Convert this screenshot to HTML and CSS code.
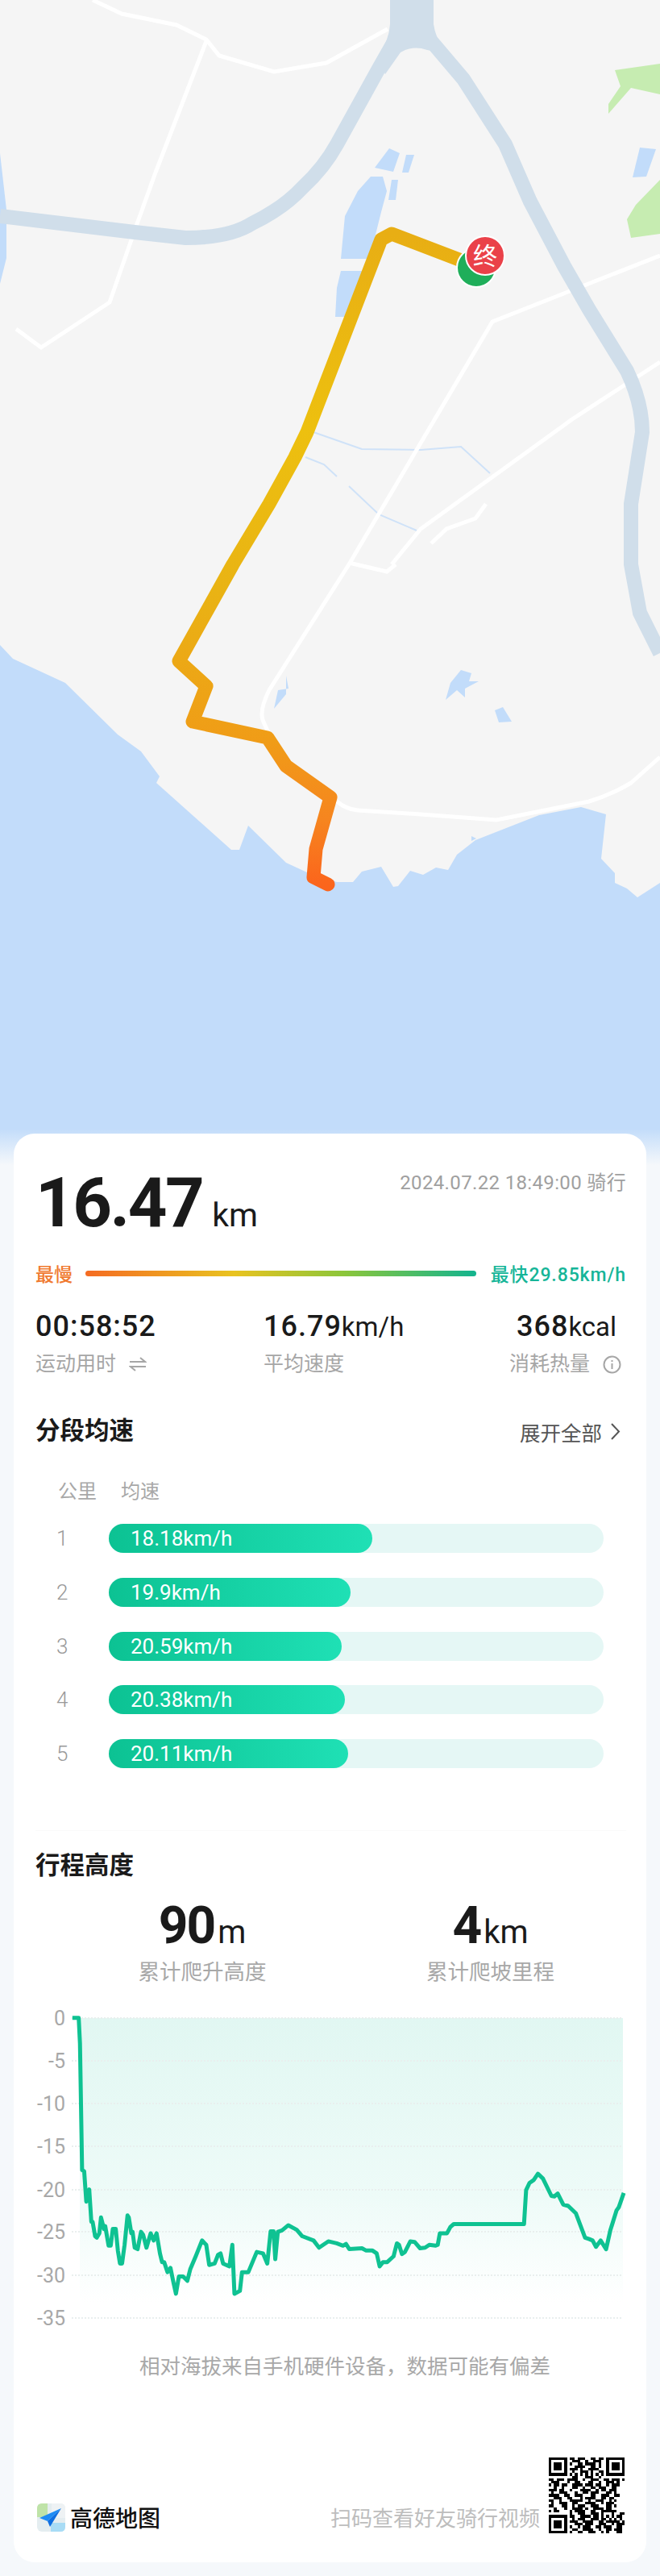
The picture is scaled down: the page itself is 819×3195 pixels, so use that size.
FILE: index.html
```html
<!DOCTYPE html>
<html lang="zh-CN">
<head>
<meta charset="utf-8">
<title>骑行记录</title>
<link rel="stylesheet" href="styles.css">
</head>
<body>

<!-- mapa: coordenadas em pixels da imagem -->
<svg class="map" width="819" height="1445" viewBox="0 0 819 1445">
  <defs>
    <linearGradient id="routeGrad" gradientUnits="userSpaceOnUse" x1="0" y1="290" x2="0" y2="1097">
      <stop offset="0" stop-color="#e8ae14"/>
      <stop offset="0.3" stop-color="#edc00f"/>
      <stop offset="0.55" stop-color="#e9b314"/>
      <stop offset="0.78" stop-color="#f09c17"/>
      <stop offset="0.9" stop-color="#f6851f"/>
      <stop offset="1" stop-color="#fb651c"/>
    </linearGradient>
    <linearGradient id="mapFade" x1="0" y1="0" x2="0" y2="1">
      <stop offset="0" stop-color="#f5f8fb" stop-opacity="0"/>
      <stop offset="1" stop-color="#f5f8fb"/>
    </linearGradient>
  </defs>
  <rect class="land" width="819" height="1445"/>

  <path class="water" d="M0 800L16 817L81 847L146 911L175 932L198 963L194 971L287 1054L297 1054L308 1024L355 1070L381 1082L418 1094L438 1094L449 1081L473 1075L488 1100L494 1099L509 1080L525 1085L541 1076L556 1079L567 1060L590 1042L669 1011L721 1001L752 1010L746 1065L763 1083L763 1095L778 1102L791 1113L819 1095V1445H0Z"/>
  <path class="water" d="M0 190L8 260V320L0 352Z"/>
  <path class="water" d="M475 219L480 237L473 263L465 295L460 321L423 321L428 268L444 237L460 219Z"/>
  <path class="water" d="M423 336L452 336L431 393L416 393L418 357Z"/>
  <path class="water" d="M483 184L496 190L488 213L465 208Z"/>
  <path class="water" d="M504 192L514 192L507 214L499 214Z"/>
  <path class="water" d="M486 223L494 223L491 248L482 248Z"/>
  <path class="water" d="M794 183L814 185L802 219L785 220Z"/>
  <path class="water" d="M572 831L585 835L582 845L594 845L577 854L577 865L567 856L553 868L559 847Z"/>
  <path class="water" d="M624 877L635 895L619 896L614 881Z"/>
  <path class="water" d="M355 838L358 854L345 856L340 879L355 861Z"/>
  <path class="water" d="M585 1037L591 1040L585 1043Z"/>
  <path class="stream" d="M389 536L449 557L522 558L572 554L608 587"/>
  <path class="stream" d="M379 567L402 576L418 591M433 603L470 638L517 658"/>

  <path class="park" d="M763 87L819 79V117L783 109L755 141V129L770 107Z"/>
  <path class="park" d="M819 223L789 254L778 272L783 295L819 290Z"/>

  <g class="minor">
    <path d="M115 0L151 17L219 31L256 49L272 69L340 89L405 78L481 36"/>
    <path d="M256 51L193 214L167 286L136 375L51 431L20 408"/>
    <path d="M819 317L611 399L433 700L334 856Q322 880 326 893L334 911"/>
    <path d="M819 449L710 520L522 656L486 700"/>
    <path d="M603 625L590 643L554 656L535 674"/>
    <path d="M433 698L480 709L491 700"/>
    <path d="M418 994Q430 1004 444 1005L522 1010L616 1017L731 994Q760 985 783 971L819 939"/>
  </g>

  <g class="major">
    <path d="M0 268L167 288L230 295Q285 295 313 277Q352 258 376 232Q402 208 418 179L470 85L490 50"/>
    <path d="M530 45L575 98L627 179L658 250L700 330L731 384L778 460Q797 500 797 536L783 625V700L794 760L819 810"/>
  </g>
  <path class="junction" d="M484 0H538V30Q540 45 552 66L530 62Q512 56 497 65L478 92L468 72Q483 50 484 30Z"/>

  <path class="route" d="M575 324L486 290L473 297L381 536L366 567L334 625L289 700L222 820L256 851L239 895L332 915L355 950L410 989L392 1053L389 1088L407 1097"/>

  <circle class="pin-start" cx="591" cy="332" r="24"/>
  <circle class="pin-end" cx="602" cy="317" r="24"/>
  <text class="pin-text" x="602" y="328">终</text>

  <rect x="0" y="1400" width="819" height="45" fill="url(#mapFade)"/>
</svg>

<div class="card">

  <div class="head">
    <div class="dist"><span class="dist-num">16.47</span><span class="dist-unit">km</span></div>
    <div class="date">2024.07.22 18:49:00 骑行</div>
  </div>

  <div class="speed-range">
    <span class="slow">最慢</span>
    <div class="speed-bar"></div>
    <span class="fast">最快29.85km/h</span>
  </div>

  <div class="stats">
    <div>
      <div class="stat-val">00:58:52</div>
      <div class="stat-label">运动用时
        <svg class="icon" width="22" height="18" viewBox="0 0 22 18"><path d="M1 6H20L14 1M21 12H2L8 17"/></svg>
      </div>
    </div>
    <div>
      <div class="stat-val">16.79<small>km/h</small></div>
      <div class="stat-label">平均速度</div>
    </div>
    <div class="stat-right">
      <div class="stat-val">368<small>kcal</small></div>
      <div class="stat-label">消耗热量
        <svg class="icon" width="23" height="23" viewBox="0 0 23 23"><circle cx="11.5" cy="11.5" r="10"/><path d="M11.5 10V17M11.5 6V8"/></svg>
      </div>
    </div>
  </div>

  <div class="section-head">
    <h3>分段均速</h3>
    <div class="more">展开全部
      <svg class="icon chevron" width="13" height="21" viewBox="0 0 13 21"><path d="M2 1L11 10.5L2 20"/></svg>
    </div>
  </div>

  <div class="col-head"><span>公里</span><span>均速</span></div>

  <div class="bars">
    <div class="bar-row"><span class="bar-no">1</span><div class="track"><div class="fill" style="width:327px">18.18km/h</div></div></div>
    <div class="bar-row"><span class="bar-no">2</span><div class="track"><div class="fill" style="width:300px">19.9km/h</div></div></div>
    <div class="bar-row"><span class="bar-no">3</span><div class="track"><div class="fill" style="width:289px">20.59km/h</div></div></div>
    <div class="bar-row"><span class="bar-no">4</span><div class="track"><div class="fill" style="width:293px">20.38km/h</div></div></div>
    <div class="bar-row"><span class="bar-no">5</span><div class="track"><div class="fill" style="width:297px">20.11km/h</div></div></div>
  </div>

  <div class="altitude">
    <h3>行程高度</h3>
    <div class="climb">
      <div class="climb-item">
        <div class="climb-val">90<small>m</small></div>
        <div class="climb-label">累计爬升高度</div>
      </div>
      <div class="climb-item">
        <div class="climb-val">4<small>km</small></div>
        <div class="climb-label">累计爬坡里程</div>
      </div>
    </div>
  </div>

  <svg class="chart" width="733" height="400" viewBox="44 2490 733 400">
    <defs>
      <linearGradient id="areaGrad" x1="0" y1="0" x2="0" y2="1">
        <stop offset="0" stop-color="#e1f7f2"/>
        <stop offset="0.6" stop-color="#eefbf8"/>
        <stop offset="0.95" stop-color="#ffffff"/>
      </linearGradient>
    </defs>
    <rect x="99" y="2503" width="674" height="372" fill="url(#areaGrad)"/>
    <g class="grid">
      <path d="M89 2503H773M89 2556H773M89 2609H773M89 2662H773M89 2716H773M89 2768H773M89 2822H773M89 2875H773"/>
    </g>
    <g class="axis">
      <text x="81" y="2512">0</text>
      <text x="81" y="2565">-5</text>
      <text x="81" y="2618">-10</text>
      <text x="81" y="2671">-15</text>
      <text x="81" y="2725">-20</text>
      <text x="81" y="2777">-25</text>
      <text x="81" y="2831">-30</text>
      <text x="81" y="2884">-35</text>
    </g>
    <!-- pontos medidos no recorte ampliado, por isso a escala -->
    <g transform="translate(0 2270) scale(0.5223 0.3571)">
      <polyline class="line" points="172,652 187,652 190,740 195,1180 200,1185 205,1290 212,1248 217,1360 220,1360 226,1410 230,1415 236,1400 240,1345 247,1385 250,1375 258,1443 263,1443 268,1385 275,1385 280,1460 285,1505 290,1505 296,1440 303,1338 306,1345 312,1400 315,1395 320,1450 327,1455 335,1395 340,1405 348,1450 358,1400 365,1425 372,1400 380,1470 385,1500 390,1500 398,1535 405,1520 412,1570 418,1610 425,1550 435,1550 445,1565 452,1525 465,1480 480,1425 490,1440 497,1510 510,1505 518,1475 524,1470 530,1505 545,1515 552,1440 557,1610 570,1600 575,1535 590,1535 600,1500 610,1465 625,1470 635,1505 643,1393 650,1393 654,1490 660,1395 670,1390 685,1372 705,1388 718,1410 745,1425 758,1450 780,1428 800,1435 815,1443 822,1437 830,1455 860,1452 870,1460 885,1460 895,1470 902,1515 910,1500 920,1500 935,1480 943,1435 948,1440 955,1472 962,1465 975,1428 985,1430 998,1452 1010,1450 1020,1440 1035,1443 1040,1440 1045,1400 1062,1400 1070,1378 1078,1368 1245,1368 1250,1250 1258,1225 1268,1215 1278,1193 1290,1210 1310,1270 1317,1272 1325,1262 1338,1300 1350,1305 1368,1330 1390,1415 1400,1420 1408,1425 1416,1447 1427,1425 1440,1455 1450,1390 1465,1320 1470,1310 1482,1260"/>
    </g>
  </svg>

  <p class="note">相对海拔来自手机硬件设备，数据可能有偏差</p>

  <div class="foot">
    <div class="brand">
      <svg width="35" height="35" viewBox="0 0 35 35">
        <rect width="35" height="35" rx="6" fill="#e4edf0"/>
        <path d="M0 6Q0 0 6 0H13V17H0Z" fill="#bfe3a8"/>
        <path d="M18 0H29Q35 0 35 6V18H18Z" fill="#eef2f4"/>
        <path d="M17 24H35V29Q35 35 29 35H17Z" fill="#a8dcf5"/>
        <path d="M30 6L3 18L13 22Z" fill="#1e8cf5"/>
        <path d="M30 6L13 22L16 29Z" fill="#0f6fe0"/>
      </svg>
      <span>高德地图</span>
    </div>
    <div class="scan">
      <span>扫码查看好友骑行视频</span>
      <svg class="qr" width="94" height="94" viewBox="0 0 29 29">
        <path fill-rule="evenodd" d="M0 0h7v7h-7zM1 1v5h5v-5zM2 2h3v3h-3zM22 0h7v7h-7zM23 1v5h5v-5zM24 2h3v3h-3zM0 22h7v7h-7zM1 23v5h5v-5zM2 24h3v3h-3z"/>
        <path class="qr-data" d="M8 .5h2m1 0h3m2 0h2m1 0h2
          M9 1.5h3m2 0h1m2 0h3
          M8 2.5h1m2 0h2m1 0h4m1 0h1
          M10 3.5h4m2 0h2m1 0h1
          M8 4.5h3m1 0h1m2 0h4
          M9 5.5h1m2 0h3m1 0h1m2 0h2
          M8 6.5h1m1 0h1m1 0h1m1 0h1m1 0h1m1 0h1m1 0h1
          M9 7.5h2m3 0h3m2 0h1
          M0 8.5h2m1 0h3m1 0h4m2 0h1m2 0h3m2 0h2m1 0h3m1 0h2
          M1 9.5h3m3 0h1m2 0h2m3 0h2m2 0h1m2 0h3m1 0h1
          M0 10.5h1m1 0h2m1 0h2m2 0h4m1 0h3m1 0h2m2 0h1m1 0h3
          M2 11.5h1m2 0h1m3 0h2m2 0h1m2 0h2m1 0h3m2 0h2
          M0 12.5h3m1 0h2m2 0h1m3 0h4m2 0h1m1 0h2m1 0h3
          M1 13.5h1m2 0h3m3 0h1m2 0h2m1 0h3m3 0h2m1 0h1
          M0 14.5h4m2 0h2m2 0h3m3 0h2m2 0h3m2 0h2
          M2 15.5h3m2 0h2m3 0h1m1 0h4m2 0h2m1 0h2
          M0 16.5h2m2 0h1m3 0h5m2 0h1m2 0h3m2 0h1m1 0h1
          M1 17.5h1m2 0h3m2 0h2m3 0h4m2 0h1m1 0h3
          M0 18.5h2m3 0h2m2 0h1m1 0h3m2 0h3m3 0h2m1 0h1
          M2 19.5h1m3 0h1m2 0h4m1 0h1m2 0h4m1 0h2
          M0 20.5h1m1 0h2m4 0h1m1 0h4m2 0h2m2 0h6
          M8 21.5h1m2 0h3m2 0h3m1 0h1m3 0h1m2 0h2
          M8 22.5h2m2 0h4m1 0h2m1 0h1m1 0h1m1 0h1m1 0h2
          M9 23.5h1m1 0h3m2 0h3m1 0h2m1 0h1m1 0h1m1 0h1
          M8 24.5h3m2 0h4m2 0h2m1 0h5m1 0h1
          M10 25.5h3m1 0h3m2 0h3m2 0h1m1 0h3
          M8 26.5h1m2 0h1m1 0h3m2 0h2m1 0h3m2 0h2
          M9 27.5h2m2 0h4m2 0h1m2 0h2m1 0h3
          M8 28.5h1m2 0h2m2 0h3m2 0h1m1 0h1m3 0h2"/>
      </svg>
    </div>
  </div>

</div>

</body>
</html>
```

FILE: styles.css
```css
body{
    margin: 0;
    padding-bottom: 17px;
    background-color: #f5f8fb;
    font-family: Roboto, "Noto Sans CJK SC", sans-serif;
    color: #1a1a1a;
}

h3{
    margin: 0;
    font-size: 30.5px;
    line-height: 40px;
    font-weight: 700;
}

small{
    font-size: 33px;
    line-height: 1;
    font-weight: 400;
}

/* mapa */
.map{
    display: block;
}

.land{ fill: #f5f5f5; }
.water{ fill: #c2dcfa; }
.park{ fill: #c6ecb1; }

.stream{
    fill: none;
    stroke: #cfe2f8;
    stroke-width: 2;
}

.minor{
    fill: none;
    stroke: #ffffff;
    stroke-width: 5;
}

.major{
    fill: none;
    stroke: #d0deea;
    stroke-width: 18;
}

.junction{ fill: #d0deea; }

.route{
    fill: none;
    stroke: url(#routeGrad);
    stroke-width: 17;
    stroke-linejoin: round;
    stroke-linecap: round;
}

.pin-start{
    fill: #1fae5a;
    stroke: #ffffff;
    stroke-width: 2;
}

.pin-end{
    fill: #ea4149;
    stroke: #ffffff;
    stroke-width: 2;
}

.pin-text{
    fill: #ffffff;
    font-size: 30px;
    text-anchor: middle;
}

/* cartao */
.card{
    position: relative;
    margin: -39px 17px 0;
    padding: 0 25px 36px 27px;
    background-color: #ffffff;
    border-radius: 26px;
}

.head{
    display: flex;
    justify-content: space-between;
    height: 86px;
    padding-top: 44px;
}

.dist-num{
    font-size: 85px;
    line-height: 85px;
    font-weight: 700;
    letter-spacing: -2.5px;
}

.dist-unit{
    margin-left: 12px;
    font-size: 41px;
    line-height: 1;
}

.dist{
    line-height: 85px;
}

.date{
    margin-top: 2px;
    font-size: 24px;
    line-height: 30px;
    letter-spacing: 0.35px;
    color: #a0a0a0;
}

.speed-range{
    display: flex;
    align-items: center;
    margin-top: 28px;
    height: 30px;
    font-size: 23px;
    font-weight: 500;
}

.slow{ color: #f07a30; }

.fast{
    color: #16b598;
    letter-spacing: 0.9px;
}

.speed-bar{
    flex: 1;
    height: 7px;
    margin: 0 18px 0 16px;
    border-radius: 4px;
    background: linear-gradient(90deg, #f56b22, #e9c320 38%, #8cc63a 66%, #13b48f);
}

.stats{
    display: grid;
    grid-template-columns: 283px 305px 1fr;
    margin-top: 29px;
}

.stat-val{
    font-size: 36px;
    line-height: 44px;
    font-weight: 500;
    letter-spacing: 1px;
}

.stat-val small{
    letter-spacing: 0;
}

.stat-right .stat-val{
    padding-left: 9px;
}

.stat-label{
    display: flex;
    align-items: center;
    margin-top: 10px;
    font-size: 25px;
    line-height: 30px;
    color: #a6a6a6;
}

.icon{
    fill: none;
    stroke: #a6a6a6;
    stroke-width: 2;
}

.stat-label .icon{
    margin-left: 16px;
}

.section-head{
    display: flex;
    justify-content: space-between;
    align-items: center;
    margin-top: 48px;
}

.more{
    display: flex;
    align-items: center;
    padding-right: 7px;
    font-size: 25.5px;
    color: #555555;
}

.chevron{
    margin-left: 10px;
    stroke: #555555;
}

.col-head{
    display: flex;
    gap: 30px;
    margin-top: 40px;
    padding-left: 28px;
    font-size: 24px;
    line-height: 30px;
    color: #a8a8a8;
}

.bars{
    display: flex;
    flex-direction: column;
    gap: 30.75px;
    margin-top: 25px;
}

.bar-row{
    display: flex;
    align-items: center;
}

.bar-no{
    width: 91px;
    padding-left: 26px;
    box-sizing: border-box;
    font-size: 26px;
    font-weight: 300;
    color: #999999;
}

.track{
    width: 614px;
    height: 36px;
    border-radius: 18px;
    background-color: #e5f7f5;
}

.fill{
    height: 36px;
    padding-left: 27px;
    box-sizing: border-box;
    border-radius: 18px;
    background: linear-gradient(90deg, #0cc293, #1fe0b5);
    font-size: 26px;
    line-height: 36px;
    color: #ffffff;
}

.altitude{
    margin-top: 77px;
    padding-top: 23px;
    border-top: 1px solid #fafafa;
}

.climb{
    display: flex;
    margin-top: 23px;
}

.climb-item{
    width: 357px;
    margin-left: 28px;
    text-align: center;
    margin-right: -28px;
}

.climb-item:first-child{
    width: 358px;
}

.climb-val{
    font-size: 64px;
    line-height: 64px;
    font-weight: 700;
    letter-spacing: -2px;
}

.climb-val small{
    font-size: 40px;
    letter-spacing: 0;
    margin-left: 4px;
}

.climb-label{
    margin-top: 10px;
    font-size: 26.5px;
    line-height: 30px;
    color: #a8a8a8;
}

.chart{
    display: block;
    margin-top: 29px;
}

.grid path{
    fill: none;
    stroke: #e9efee;
    stroke-width: 2;
    stroke-dasharray: 2 2;
}

.axis text{
    fill: #a8a8a8;
    font-size: 25px;
    text-anchor: end;
}

.line{
    fill: none;
    stroke: #0fc292;
    stroke-width: 5;
    stroke-linejoin: round;
    vector-effect: non-scaling-stroke;
}

.note{
    margin: 30px 0 0;
    padding-left: 35px;
    font-size: 25.5px;
    line-height: 30px;
    text-align: center;
    color: #a8a8a8;
}

.foot{
    display: flex;
    justify-content: space-between;
    align-items: flex-end;
    margin-top: 98px;
}

.brand{
    display: flex;
    align-items: center;
    gap: 6px;
    margin-left: 2px;
    font-size: 28px;
    font-weight: 500;
    color: #111111;
}

.scan{
    display: flex;
    align-items: flex-end;
    gap: 11px;
    font-size: 26px;
    line-height: 30px;
    color: #bdbdbd;
}

.scan span{
    margin-bottom: 3px;
}

.qr{
    display: block;
    margin-right: 2px;
    shape-rendering: crispEdges;
}

.qr-data{
    fill: none;
    stroke: #000000;
    stroke-width: 1;
}
```
